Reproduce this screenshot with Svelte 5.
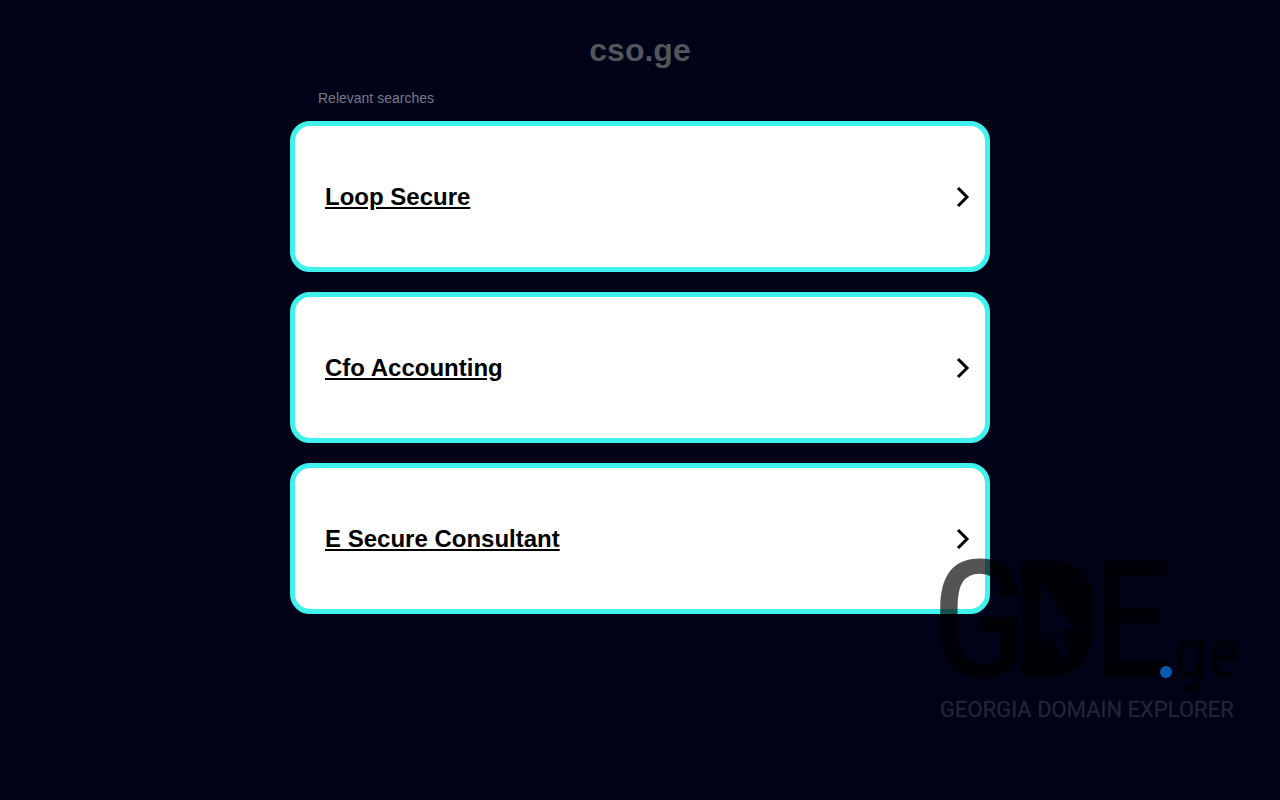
<script lang="ts">
  const domain = 'cso.ge';

  const searches = ['Loop Secure', 'Cfo Accounting', 'E Secure Consultant'];
</script>

<main>
  <h1>{domain}</h1>

  <section class="searches">
    <p class="label">Relevant searches</p>
    <ul>
      {#each searches as term}
        <li>
          <a href="#{term.toLowerCase().replaceAll(' ', '-')}">
            <span>{term}</span>
            <svg class="chevron" viewBox="0 0 14 22" aria-hidden="true">
              <path d="M2 2l9 9-9 9" />
            </svg>
          </a>
        </li>
      {/each}
    </ul>
  </section>
</main>

<svg class="watermark" viewBox="0 0 300 170" role="img" aria-label="GDE.ge Georgia Domain Explorer">
  <!-- the D is solid, its counter is the cursor -->
  <g opacity="0.67">
    <text class="mark" y="121" x="-6 73 154">GDE</text>
    <path d="M94 14h26q22 12 22 48t-22 52H94z" />
    <circle class="dot" cx="228" cy="118" r="6" />
    <text class="tld" x="235" y="123">ge</text>
    <text class="tagline" x="2" y="163">GEORGIA DOMAIN EXPLORER</text>
  </g>
  <path class="cursor" d="M103 28v60l11-11 8 24q5 5 9-2l-9-23 14-1z" />
</svg>

<style>
  :global(body) {
    margin: 0;
    background: #000217;
    font-family: 'Liberation Sans', Arial, sans-serif;
  }

  main {
    max-width: 700px;
    margin: 0 auto;
    padding: 32px 16px;
  }

  h1 {
    margin: 0;
    font-size: 32px;
    line-height: 37px;
    text-align: center;
    color: #53555c;
  }

  .label {
    margin: 20px 28px 14px;
    font-size: 14px;
    line-height: 18px;
    color: #777a89;
  }

  ul {
    display: flex;
    flex-direction: column;
    gap: 20px;
    margin: 0;
    padding: 0;
    list-style: none;
  }

  a {
    display: flex;
    align-items: center;
    justify-content: space-between;
    padding: 56px 15px 56px 30px;
    border: 5px solid #40f2ed;
    border-radius: 20px;
    background: #fff;
    color: #000;
    font-size: 24px;
    font-weight: bold;
    line-height: 29px;
    text-decoration: underline;
  }

  .chevron {
    flex: none;
    width: 14px;
    height: 22px;
    fill: none;
    stroke: #000;
    stroke-width: 3;
  }

  .watermark {
    position: fixed;
    right: 42px;
    bottom: 76px;
    width: 300px;
    height: 170px;
    overflow: visible;
    pointer-events: none;
  }

  .mark {
    font-family: 'Roboto Condensed', 'Liberation Sans Narrow', sans-serif;
    font-size: 160px;
    font-weight: 400;
    stroke: #000;
    stroke-width: 3;
  }

  .tld {
    font-family: 'Roboto Condensed', Roboto, sans-serif;
    font-size: 70px;
  }

  .tagline {
    font-family: Roboto, sans-serif;
    font-size: 22px;
    fill: #343642;
    stroke: #343642;
    stroke-width: 0.4;
  }

  .dot {
    fill: #0886ff;
  }

  .cursor {
    fill: #000217;
  }
</style>
